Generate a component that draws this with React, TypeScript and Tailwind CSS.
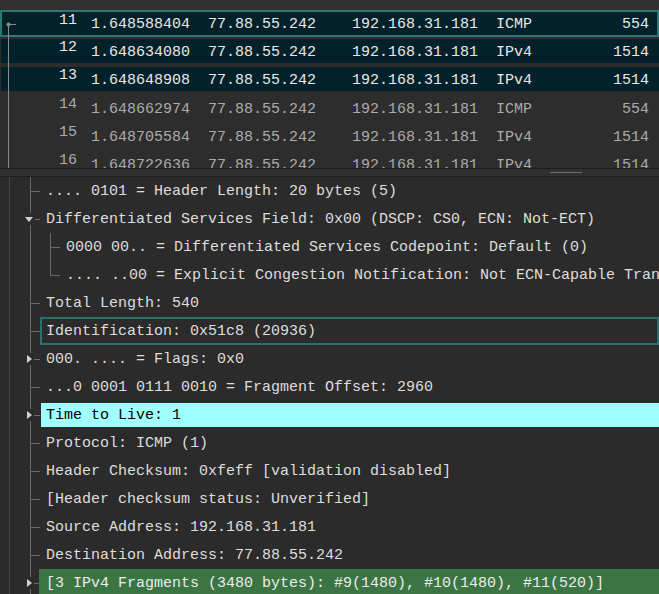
import React from 'react'

interface Packet {
  no: number
  time: string
  src: string
  dst: string
  proto: string
  len: string
  sel?: 'focus' | 'related'
}

const packets: Packet[] = [
  { no: 11, time: '1.648588404', src: '77.88.55.242', dst: '192.168.31.181', proto: 'ICMP', len: '554', sel: 'focus' },
  { no: 12, time: '1.648634080', src: '77.88.55.242', dst: '192.168.31.181', proto: 'IPv4', len: '1514', sel: 'related' },
  { no: 13, time: '1.648648908', src: '77.88.55.242', dst: '192.168.31.181', proto: 'IPv4', len: '1514', sel: 'related' },
  { no: 14, time: '1.648662974', src: '77.88.55.242', dst: '192.168.31.181', proto: 'ICMP', len: '554' },
  { no: 15, time: '1.648705584', src: '77.88.55.242', dst: '192.168.31.181', proto: 'IPv4', len: '1514' },
  { no: 16, time: '1.648722636', src: '77.88.55.242', dst: '192.168.31.181', proto: 'IPv4', len: '1514' },
]

interface Field {
  text: string
  depth?: 0 | 1
  expander?: 'down' | 'right'
  last?: boolean
  mark?: 'box' | 'ttl' | 'green'
}

const fields: Field[] = [
  { text: '.... 0101 = Header Length: 20 bytes (5)' },
  { text: 'Differentiated Services Field: 0x00 (DSCP: CS0, ECN: Not-ECT)', expander: 'down' },
  { text: '0000 00.. = Differentiated Services Codepoint: Default (0)', depth: 1 },
  { text: '.... ..00 = Explicit Congestion Notification: Not ECN-Capable Transport (0)', depth: 1, last: true },
  { text: 'Total Length: 540' },
  { text: 'Identification: 0x51c8 (20936)', mark: 'box' },
  { text: '000. .... = Flags: 0x0', expander: 'right' },
  { text: '...0 0001 0111 0010 = Fragment Offset: 2960' },
  { text: 'Time to Live: 1', expander: 'right', mark: 'ttl' },
  { text: 'Protocol: ICMP (1)' },
  { text: 'Header Checksum: 0xfeff [validation disabled]' },
  { text: '[Header checksum status: Unverified]' },
  { text: 'Source Address: 192.168.31.181' },
  { text: 'Destination Address: 77.88.55.242' },
  { text: '[3 IPv4 Fragments (3480 bytes): #9(1480), #10(1480), #11(520)]', expander: 'right', mark: 'green' },
]

const Guides: React.FC<{ f: Field }> = ({ f }) => {
  const w = f.depth === 1 ? 60 : 40
  return (
    <svg width={w} height={28} className="shrink-0">
      <line x1={9.5} y1={0} x2={9.5} y2={28} stroke="#474747" />
      <line x1={30.5} y1={0} x2={30.5} y2={28} stroke="#6a6a6a" />
      {f.depth === 1 ? (
        <>
          <line x1={50.5} y1={0} x2={50.5} y2={f.last ? 14.5 : 28} stroke="#6a6a6a" />
          <line x1={50.5} y1={14.5} x2={60} y2={14.5} stroke="#6a6a6a" />
        </>
      ) : (
        <line x1={30.5} y1={14.5} x2={40} y2={14.5} stroke="#6a6a6a" />
      )}
      {f.expander === 'down' && (
        <>
          <rect x={24} y={8} width={11} height={12} fill="#2b2b2b" />
          <polygon points="25,12 33,12 29,17" fill="#d0d0d0" />
        </>
      )}
      {f.expander === 'right' && (
        <>
          <rect x={25} y={8} width={9} height={12} fill="#2b2b2b" />
          <polygon points="27,10 32,14 27,18" fill="#d0d0d0" />
        </>
      )}
    </svg>
  )
}

const FieldRow: React.FC<{ f: Field }> = ({ f }) => {
  let cls = 'pl-[6px] text-[#dedede]'
  if (f.mark === 'box') cls = 'pl-[4px] border-2 border-[#2e6e6e] text-[#dedede]'
  if (f.mark === 'ttl') cls = 'pl-[5px] mt-[2px] mb-[2px] ml-px bg-[#a0ffff] text-black'
  if (f.mark === 'green') cls = 'pl-[7px] -ml-px bg-[#3a7543] text-[#ececec]'
  return (
    <div className="flex h-[28px] shrink-0">
      <Guides f={f} />
      <div className={`flex flex-1 items-center pt-[3px] whitespace-nowrap overflow-hidden ${cls}`}>
        {f.text}
      </div>
    </div>
  )
}

const PacketRow: React.FC<{ p: Packet }> = ({ p }) => {
  let cls = 'pl-[2px] pr-[2px] text-[#ababab]'
  if (p.sel === 'focus') cls = 'mb-px border-2 border-[#2e7676] bg-[#03212a] text-[#e8e8e8]'
  if (p.sel === 'related') cls = 'mt-px mb-[3px] ml-px pl-px pr-[2px] bg-[#03212a] text-[#e8e8e8]'
  return (
    <div className="flex h-[28px] shrink-0">
      <div className={`flex flex-1 items-center pt-[4px] ${cls}`}>
        <div className="w-[75px] text-right pb-[9px]">{p.no}</div>
        <div className="w-[117px] ml-[14px]">{p.time}</div>
        <div className="w-[144px]">{p.src}</div>
        <div className="w-[144px]">{p.dst}</div>
        <div className="flex-1">{p.proto}</div>
        <div className="pr-[8px]">{p.len}</div>
      </div>
    </div>
  )
}

export default function App() {
  return (
    <div
      className="w-[659px] h-[594px] overflow-hidden flex flex-col bg-[#2b2b2b] text-[15px]"
      style={{ fontFamily: '"Liberation Mono", "DejaVu Sans Mono", monospace' }}
    >
      {/* Packet list */}
      <div className="relative h-[168px] shrink-0 overflow-hidden bg-[#2d2d2d] flex flex-col">
        <div className="h-[10px] shrink-0 bg-[#303030]" />
        {packets.map((p) => (
          <PacketRow key={p.no} p={p} />
        ))}
        <svg className="absolute left-0 top-0 pointer-events-none" width={20} height={168}>
          <line x1={8.5} y1={24} x2={8.5} y2={168} stroke="#8a8a8a" />
          <line x1={8.5} y1={24.5} x2={16} y2={24.5} stroke="#8a8a8a" />
          <circle cx={8.5} cy={24.5} r={2} fill="#8a8a8a" />
        </svg>
      </div>

      {/* Horizontal scrollbar */}
      <div className="h-[9px] shrink-0 border-y border-[#1e1e1e] bg-[#303030]">
        <div className="ml-[550px] mt-[3px] w-[32px] h-[1px] bg-[#707070]" />
      </div>

      {/* Packet details */}
      <div className="flex flex-col flex-1 overflow-hidden">
        {fields.map((f, i) => (
          <FieldRow key={i} f={f} />
        ))}
      </div>
    </div>
  )
}
